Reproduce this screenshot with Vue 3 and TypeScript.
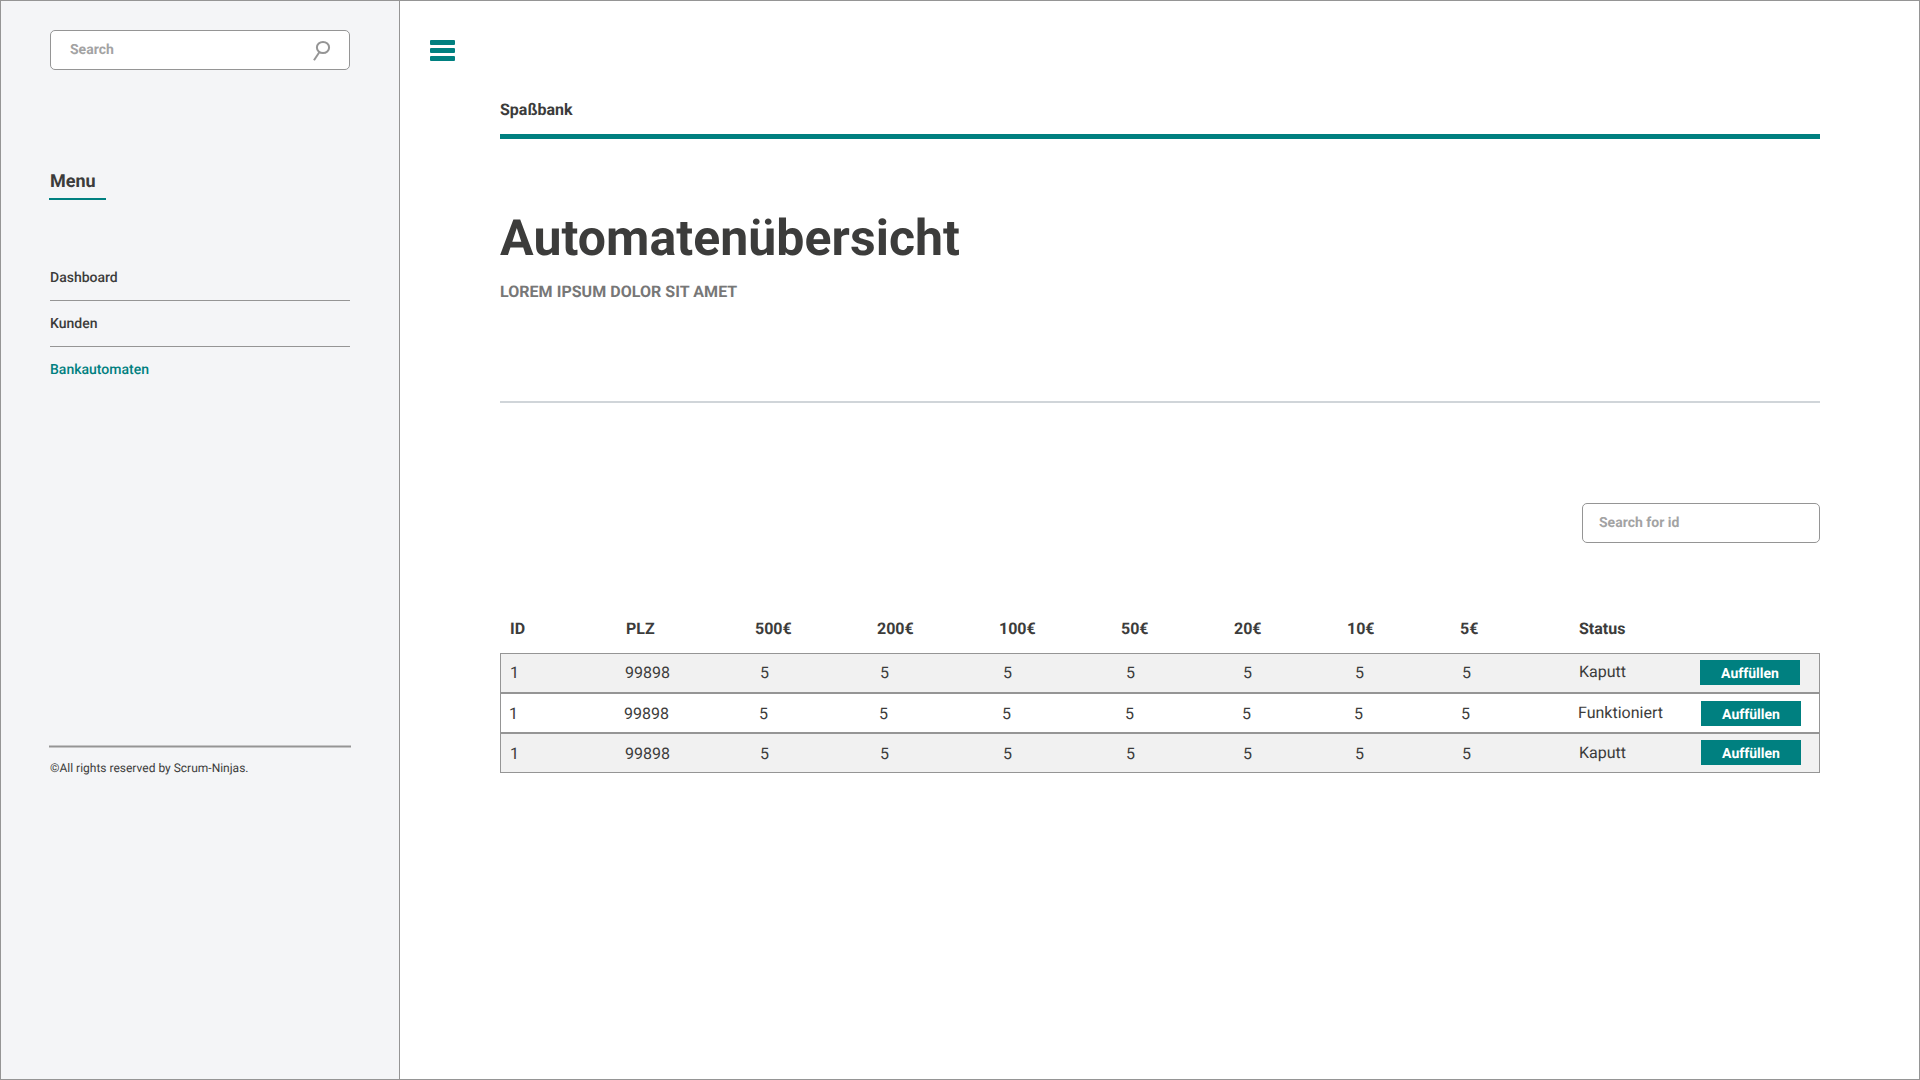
<script setup lang="ts">
interface Machine {
  id: number
  plz: string
  notes: number[]
  status: string
}

const menu: { label: string; active?: boolean }[] = [
  { label: 'Dashboard' },
  { label: 'Kunden' },
  { label: 'Bankautomaten', active: true },
]

const columns: string[] = ['ID', 'PLZ', '500€', '200€', '100€', '50€', '20€', '10€', '5€', 'Status']

const machines: Machine[] = [
  { id: 1, plz: '99898', notes: [5, 5, 5, 5, 5, 5, 5], status: 'Kaputt' },
  { id: 1, plz: '99898', notes: [5, 5, 5, 5, 5, 5, 5], status: 'Funktioniert' },
  { id: 1, plz: '99898', notes: [5, 5, 5, 5, 5, 5, 5], status: 'Kaputt' },
]
</script>

<template>
  <div class="page">
    <aside class="sidebar">
      <div class="search">
        <span>Search</span>
        <svg class="glass" width="18" height="21" viewBox="0 0 18 21" fill="none" stroke="#959595" stroke-width="2">
          <ellipse cx="10" cy="7.5" rx="6.1" ry="5.6" />
          <path d="M6.3 12.2 L1 20.2" />
        </svg>
      </div>
      <h2 class="menu-title">Menu</h2>
      <nav class="menu">
        <a v-for="m in menu" :key="m.label" class="menu-item" :class="{ active: m.active }">{{ m.label }}</a>
      </nav>
      <svg class="foot-line" width="302" height="3" viewBox="0 0 302 3">
        <path d="M0 1.5 H302" stroke="#959595" stroke-width="2" />
      </svg>
      <p class="copyright">©All rights reserved by Scrum-Ninjas.</p>
    </aside>

    <main class="main">
      <div class="burger"><i></i><i></i><i></i></div>
      <div class="content">
        <div class="brand">Spaßbank</div>
        <h1>Automatenübersicht</h1>
        <p class="subtitle">LOREM IPSUM DOLOR SIT AMET</p>
        <div class="divider"></div>
        <div class="id-search">Search for id</div>
        <div class="thead">
          <span v-for="c in columns" :key="c">{{ c }}</span>
        </div>
        <div v-for="(m, i) in machines" :key="i" class="row">
          <span>{{ m.id }}</span>
          <span>{{ m.plz }}</span>
          <span v-for="(n, j) in m.notes" :key="j">{{ n }}</span>
          <span class="status">{{ m.status }}</span>
          <button class="fill">Auffüllen</button>
        </div>
      </div>
    </main>
  </div>
</template>

<style>
body {
  margin: 0;
}
</style>

<style scoped>
.page {
  box-sizing: border-box;
  display: flex;
  width: 1920px;
  height: 1080px;
  border: 1px solid #959595;
  background: #fff;
  color: #3c3c3b;
  font-family: Roboto, sans-serif;
  text-rendering: geometricPrecision;
  overflow: hidden;
}
h1,
h2,
p {
  margin: 0;
}
.sidebar {
  box-sizing: border-box;
  width: 399px;
  flex: none;
  padding: 29px 48px 0 49px;
  background: #f4f5f7;
  border-right: 1px solid #959595;
}
.search {
  box-sizing: border-box;
  display: flex;
  justify-content: space-between;
  align-items: flex-start;
  width: 300px;
  height: 40px;
  padding: 9px 18px 0 19px;
  border: 1px solid #959595;
  border-radius: 5px;
  background: #fff;
  color: #a3a3a3;
  font-size: 14px;
  line-height: 20px;
  font-weight: 700;
}
.glass {
  display: block;
}
.menu-title {
  width: 57px;
  margin: 101px 0 0 -1px;
  padding-bottom: 6px;
  border-bottom: 2px solid #008080;
  font-size: 18px;
  line-height: 21px;
  text-indent: 1px;
}
.menu {
  width: 300px;
  margin-top: 54px;
}
.menu-item {
  box-sizing: border-box;
  display: block;
  height: 46px;
  padding-top: 15px;
  border-top: 1px solid #959595;
  font-size: 14px;
  line-height: 16px;
  font-weight: 500;
}
.menu-item:first-child {
  border-color: transparent;
}
.menu-item.active {
  color: #008080;
}
.foot-line {
  display: block;
  margin: 353px 0 0 -1px;
}
.copyright {
  margin-top: 13px;
  font-size: 12px;
  line-height: 14px;
}
.main {
  flex: 1;
}
.burger {
  display: flex;
  flex-direction: column;
  gap: 3px;
  width: 25px;
  padding: 39px 0 0 30px;
}
.burger i {
  height: 5px;
  border-radius: 1px;
  background: #008080;
}
.content {
  width: 1320px;
  margin: 39px 0 0 100px;
}
.brand {
  padding-bottom: 15px;
  border-bottom: 5px solid #008080;
  font-size: 16px;
  line-height: 19px;
  font-weight: 700;
}
h1 {
  margin-top: 71px;
  font-size: 50px;
  line-height: 58px;
  letter-spacing: 0.05px;
}
.subtitle {
  margin-top: 14px;
  color: #777;
  font-size: 16px;
  line-height: 19px;
  font-weight: 700;
  letter-spacing: 0.04px;
}
.divider {
  height: 2px;
  margin-top: 100px;
  background: #d0d5d9;
}
.id-search {
  box-sizing: border-box;
  width: 238px;
  height: 40px;
  margin: 100px 0 0 auto;
  padding: 11px 16px;
  border: 1px solid #959595;
  border-radius: 5px;
  color: #a3a3a3;
  font-size: 14px;
  line-height: 16px;
  font-weight: 700;
}
.thead {
  display: grid;
  grid-template-columns: 116px 129px 122px 122px 122px 113px 113px 113px 119px 1fr;
  margin: 76px 0 15px;
  padding-left: 10px;
  font-size: 16px;
  line-height: 19px;
  font-weight: 700;
}
.row {
  box-sizing: border-box;
  display: grid;
  grid-template-columns: 115px 135px 120px 123px 123px 117px 112px 107px 117px 121px 100px;
  align-items: start;
  height: 40px;
  padding: 9px 0 0 9px;
  border: 1px solid #959595;
  background: #f1f1f1;
  font-size: 16px;
  line-height: 19px;
}
.row .status {
  margin-top: -1px;
}
.row:nth-last-child(2) {
  padding: 10px 0 0 8px;
  background: #fff;
}
.row:last-child {
  padding-top: 10px;
}
.fill {
  box-sizing: border-box;
  width: 100px;
  height: 25px;
  margin-top: -3px;
  padding: 2px 0 0;
  border: 0;
  background: #008080;
  color: #fff;
  font: 700 14px/16px Roboto, sans-serif;
  text-rendering: inherit;
}
.row:nth-last-child(2) .fill {
  margin: -3px 0 0 2px;
}
.row:last-child .fill {
  margin: -4px 0 0 1px;
}
</style>
